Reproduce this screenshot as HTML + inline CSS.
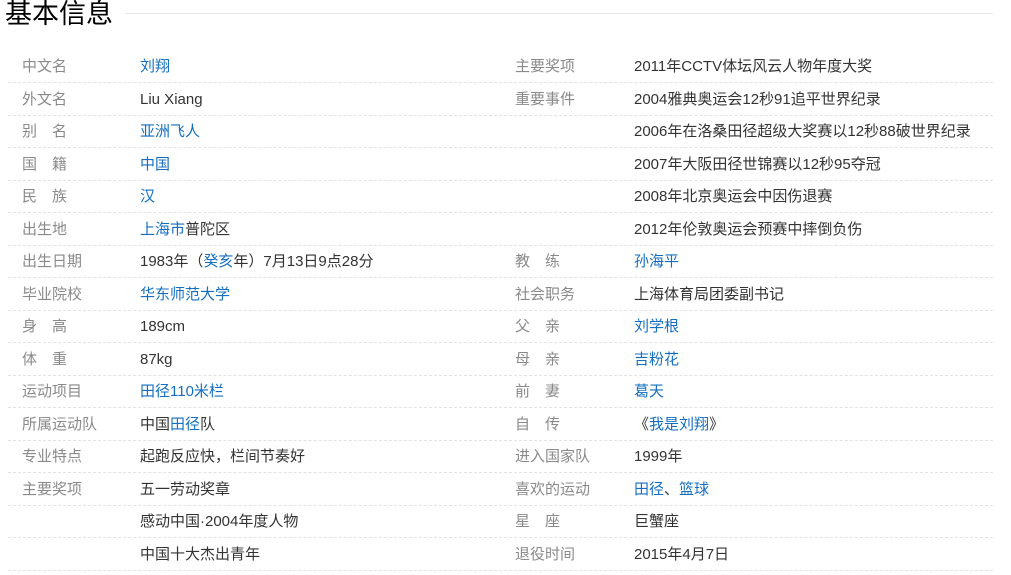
<!DOCTYPE html>
<html><head><meta charset="utf-8"><style>
body{margin:0;width:1011px;height:575px;background:#fff;overflow:hidden;position:relative;font-family:"Liberation Sans","Noto Sans CJK SC",sans-serif;font-size:15px;color:#333}
.t{position:absolute;left:5px;top:-6px;font-size:27px;color:#000;line-height:40px}
.tl{position:absolute;left:125px;right:18px;top:13px;border-top:1px solid #e6e6e6}
.ln{position:absolute;left:8px;width:985px;border-top:1px dashed #e2e2e2}
.r{position:absolute;height:32px;line-height:34px;white-space:nowrap}
.L{left:8px;width:485px}.R{left:500px;width:493px}
.k{position:absolute;left:14px;color:#8a8a8a}
.v{position:absolute;left:132px}
.R .k{left:15px}.R .v{left:134px}
a{color:#136ec2;text-decoration:none}
</style></head><body>
<div class="t">基本信息</div><div class="tl"></div>
<div class="ln" style="top:82px"></div><div class="ln" style="top:114.5px"></div><div class="ln" style="top:147px"></div><div class="ln" style="top:179.5px"></div><div class="ln" style="top:212px"></div><div class="ln" style="top:244.5px"></div><div class="ln" style="top:277px"></div><div class="ln" style="top:309.5px"></div><div class="ln" style="top:342px"></div><div class="ln" style="top:374.5px"></div><div class="ln" style="top:407px"></div><div class="ln" style="top:439.5px"></div><div class="ln" style="top:472px"></div><div class="ln" style="top:504.5px"></div><div class="ln" style="top:537px"></div><div class="ln" style="top:569.5px"></div>
<div class="r L" style="top:50px"><span class="k">中文名</span><span class="v"><a>刘翔</a></span></div>
<div class="r L" style="top:82.5px"><span class="k">外文名</span><span class="v">Liu Xiang</span></div>
<div class="r L" style="top:115px"><span class="k">别　名</span><span class="v"><a>亚洲飞人</a></span></div>
<div class="r L" style="top:147.5px"><span class="k">国　籍</span><span class="v"><a>中国</a></span></div>
<div class="r L" style="top:180px"><span class="k">民　族</span><span class="v"><a>汉</a></span></div>
<div class="r L" style="top:212.5px"><span class="k">出生地</span><span class="v"><a>上海市</a>普陀区</span></div>
<div class="r L" style="top:245px"><span class="k">出生日期</span><span class="v">1983年（<a>癸亥</a>年）7月13日9点28分</span></div>
<div class="r L" style="top:277.5px"><span class="k">毕业院校</span><span class="v"><a>华东师范大学</a></span></div>
<div class="r L" style="top:310px"><span class="k">身　高</span><span class="v">189cm</span></div>
<div class="r L" style="top:342.5px"><span class="k">体　重</span><span class="v">87kg</span></div>
<div class="r L" style="top:375px"><span class="k">运动项目</span><span class="v"><a>田径110米栏</a></span></div>
<div class="r L" style="top:407.5px"><span class="k">所属运动队</span><span class="v">中国<a>田径</a>队</span></div>
<div class="r L" style="top:440px"><span class="k">专业特点</span><span class="v">起跑反应快，栏间节奏好</span></div>
<div class="r L" style="top:472.5px"><span class="k">主要奖项</span><span class="v">五一劳动奖章</span></div>
<div class="r L" style="top:505px"><span class="v">感动中国·2004年度人物</span></div>
<div class="r L" style="top:537.5px"><span class="v">中国十大杰出青年</span></div>

<div class="r R" style="top:50px"><span class="k">主要奖项</span><span class="v">2011年CCTV体坛风云人物年度大奖</span></div>
<div class="r R" style="top:82.5px"><span class="k">重要事件</span><span class="v">2004雅典奥运会12秒91追平世界纪录</span></div>
<div class="r R" style="top:115px"><span class="v">2006年在洛桑田径超级大奖赛以12秒88破世界纪录</span></div>
<div class="r R" style="top:147.5px"><span class="v">2007年大阪田径世锦赛以12秒95夺冠</span></div>
<div class="r R" style="top:180px"><span class="v">2008年北京奥运会中因伤退赛</span></div>
<div class="r R" style="top:212.5px"><span class="v">2012年伦敦奥运会预赛中摔倒负伤</span></div>
<div class="r R" style="top:245px"><span class="k">教　练</span><span class="v"><a>孙海平</a></span></div>
<div class="r R" style="top:277.5px"><span class="k">社会职务</span><span class="v">上海体育局团委副书记</span></div>
<div class="r R" style="top:310px"><span class="k">父　亲</span><span class="v"><a>刘学根</a></span></div>
<div class="r R" style="top:342.5px"><span class="k">母　亲</span><span class="v"><a>吉粉花</a></span></div>
<div class="r R" style="top:375px"><span class="k">前　妻</span><span class="v"><a>葛天</a></span></div>
<div class="r R" style="top:407.5px"><span class="k">自　传</span><span class="v">《<a>我是刘翔</a>》</span></div>
<div class="r R" style="top:440px"><span class="k">进入国家队</span><span class="v">1999年</span></div>
<div class="r R" style="top:472.5px"><span class="k">喜欢的运动</span><span class="v"><a>田径</a>、<a>篮球</a></span></div>
<div class="r R" style="top:505px"><span class="k">星　座</span><span class="v">巨蟹座</span></div>
<div class="r R" style="top:537.5px"><span class="k">退役时间</span><span class="v">2015年4月7日</span></div>
</body></html>
